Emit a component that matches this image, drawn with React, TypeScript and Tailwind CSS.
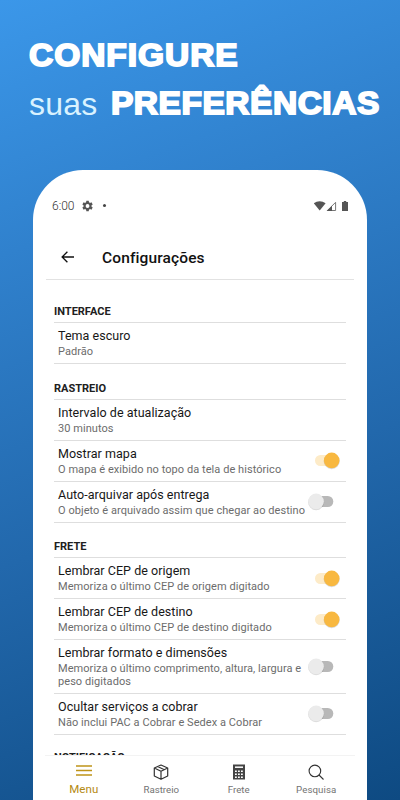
import React from "react";

type SettingProps = { title: string; detail: string; on?: boolean; tall?: boolean };

function Toggle({ on }: { on: boolean }) {
  return (
    <svg className="mb-px ml-auto mr-1.5 h-5 w-8 shrink-0" viewBox="0 0 32 20">
      <rect x={on ? 7 : 6} y="5" width={on ? 18 : 19.3} height="11" rx="5.5" fill={on ? "#fdebc8" : "#b8b8b8"} />
      <circle cx={on ? 23.7 : 8.1} cy="11.2" r="8" fill="#000" opacity=".14" />
      <circle cx={on ? 23.7 : 8.1} cy="10.4" r="7.8" fill={on ? "#f8b840" : "#ebebeb"} />
    </svg>
  );
}

function Setting({ title, detail, on, tall }: SettingProps) {
  return (
    <div className={`flex items-center border-b border-[#dedede] pl-1 ${tall ? "h-[53.5px]" : "h-[41px]"}`}>
      <div className="w-0 whitespace-pre">
        <div className="text-[12.5px] leading-[17px] tracking-[0.04px] text-[#171717]">{title}</div>
        <div className={`text-[11px] tracking-[0.06px] text-[#6c6c6c] ${tall ? "mt-px leading-[13.5px]" : "mt-px leading-[14px]"}`}>{detail}</div>
      </div>
      {on !== undefined && <Toggle on={on} />}
    </div>
  );
}

function Heading({ children, size }: { children: string; size: string }) {
  return <h2 className={`flex items-end border-b border-[#dedede] pb-[3px] text-[11px] font-bold leading-[14px] text-[#202020] ${size}`}>{children}</h2>;
}

export default function App() {
  return (
    <main className="flex h-[800px] w-[400px] flex-col overflow-hidden bg-[linear-gradient(160deg,#3b97e9_0%,#3081cd_27%,#2268ac_60%,#0e4a82_100%)] font-['Roboto',sans-serif]">
      <header className="h-[170px] shrink-0 whitespace-nowrap pl-[29px] pt-[32px] font-['Liberation_Sans',Arial,sans-serif] text-white">
        <div className="h-12 origin-left scale-x-[1.08] text-[31px] font-bold leading-[48px] tracking-[0.9px] [-webkit-text-stroke:1.8px_white]">CONFIGURE</div>
        <div className="flex h-12 items-center leading-[48px]">
          <span className="w-[82px] text-[32px] tracking-[0.2px] text-[#d9f2ff]">suas</span>
          <span className="origin-left scale-x-[1.08] text-[31px] font-bold tracking-[0.5px] [-webkit-text-stroke:1.8px_white]">PREFERÊNCIAS</span>
        </div>
      </header>
      <section className="ml-[33px] flex h-[630px] w-[334px] shrink-0 flex-col overflow-hidden rounded-t-[50px] bg-white">
        <div className="flex h-[71px] shrink-0 items-center pl-[19px] pr-[18px] text-[12px] text-[#555]">
          <span className="w-[29px] font-light text-[#333]">6:00</span>
          <svg className="h-3 w-3" viewBox="2 2 20 20" fill="#555">
            <path fillRule="evenodd" d="M19.4 13c.1-.7.1-1.3 0-2l2.1-1.6-2-3.5-2.5 1a8 8 0 0 0-1.7-1L14.9 3.3h-4l-.4 2.6a8 8 0 0 0-1.7 1l-2.5-1-2 3.5L6.4 11c-.1.7-.1 1.3 0 2l-2.1 1.6 2 3.5 2.5-1 1.7 1 .4 2.6h4l.4-2.6 1.7-1 2.5 1 2-3.5zM12.9 8.8a3.2 3.2 0 1 1 0 6.4 3.2 3.2 0 0 1 0-6.4z" />
          </svg>
          <span className="ml-[10px] h-[3px] w-[3px] rounded-full bg-[#444]" />
          <svg className="ml-auto h-3 w-9" viewBox="0 0 36 12" fill="#555">
            <path d="M.8 3.2C4.3.5 9 .5 12.6 3.2L6.7 10.6z" />
            <path d="M14.4 10.5 22.6 2.3v8.2z" fill="none" stroke="#777" />
            <path d="m13.7 11 5.3-5.2V11z" />
            <path d="M29 2h1.8V1h2.4v1H35v9h-6z" />
          </svg>
        </div>
        <div className="flex h-[39px] w-[308px] shrink-0 items-center self-center border-b border-[#e2e2e2] pb-[5px] pl-[15px]">
          <svg className="mb-0.5 h-3 w-[13px]" viewBox="0 0 13 12" fill="none" stroke="#111" strokeWidth="1.3"><path d="M13 6H1.2M6.4.7 1.1 6l5.3 5.3" /></svg>
          <h1 className="ml-[28px] text-[15.5px] font-medium leading-5 tracking-[0.12px] text-[#111]">Configurações</h1>
        </div>
        <div className="h-[475px] shrink-0 overflow-hidden px-[21px]">
          <Heading size="h-[42.5px]">INTERFACE</Heading>
          <Setting title="Tema escuro" detail="Padrão" />
          <Heading size="h-[36px]">RASTREIO</Heading>
          <Setting title="Intervalo de atualização" detail="30 minutos" />
          <Setting title="Mostrar mapa" detail="O mapa é exibido no topo da tela de histórico" on={true} />
          <Setting title="Auto-arquivar após entrega" detail="O objeto é arquivado assim que chegar ao destino" on={false} />
          <Heading size="h-[35.5px]">FRETE</Heading>
          <Setting title="Lembrar CEP de origem" detail="Memoriza o último CEP de origem digitado" on={true} />
          <Setting title="Lembrar CEP de destino" detail="Memoriza o último CEP de destino digitado" on={true} />
          <Setting title="Lembrar formato e dimensões" detail={"Memoriza o último comprimento, altura, largura e\npeso digitados"} on={false} tall />
          <Setting title="Ocultar serviços a cobrar" detail="Não inclui PAC a Cobrar e Sedex a Cobrar" on={false} />
          <Heading size="h-[34px]">NOTIFICAÇÃO</Heading>
        </div>
        <nav className="mx-3 grid h-[45px] shrink-0 grid-cols-4 border-t border-[#f3f3f3] text-center text-[9.7px] leading-3 text-[#737373]">
          <div className="flex flex-col items-center pt-[9px] text-[11.5px] tracking-[0.1px] text-[#b48a13]">
            <svg className="h-3 w-4" viewBox="0 0 16 12" stroke="#bf9419" strokeWidth="1.3"><path d="M0 1h16M0 5.5h16M0 10h16" /></svg>
            <span className="mt-[6px]">Menu</span>
          </div>
          <div className="flex flex-col items-center pt-2">
            <svg className="h-4 w-4" viewBox="0 0 16 16" fill="none" stroke="#333" strokeWidth="1.2" strokeLinejoin="round"><path d="M8 1 14.7 4v8L8 15.3 1.3 12V4zM1.3 4 8 7.2 14.7 4M8 7.2v8.1M4.6 2.5l6.8 3.2" /></svg>
            <span className="mt-1">Rastreio</span>
          </div>
          <div className="flex flex-col items-center pt-2">
            <svg className="h-4 w-3" viewBox="0 0 12 16"><path fill="#444" d="M0 .5h12v15H0z" /><path stroke="#fff" strokeWidth="1.5" d="M2 3.2h8" /><path stroke="#fff" strokeWidth="1.6" strokeDasharray="1.8 1.2" d="M2 7.2h8M2 10.2h8M2 13.2h8" /></svg>
            <span className="mt-1">Frete</span>
          </div>
          <div className="flex flex-col items-center pt-2">
            <svg className="h-4 w-4" viewBox="0 0 16 16" fill="none" stroke="#333" strokeWidth="1.1"><circle cx="6.9" cy="6.9" r="5.8" /><path d="m11 11 4.5 4.5" /></svg>
            <span className="mt-1 tracking-[0.1px]">Pesquisa</span>
          </div>
        </nav>
      </section>
    </main>
  );
}
